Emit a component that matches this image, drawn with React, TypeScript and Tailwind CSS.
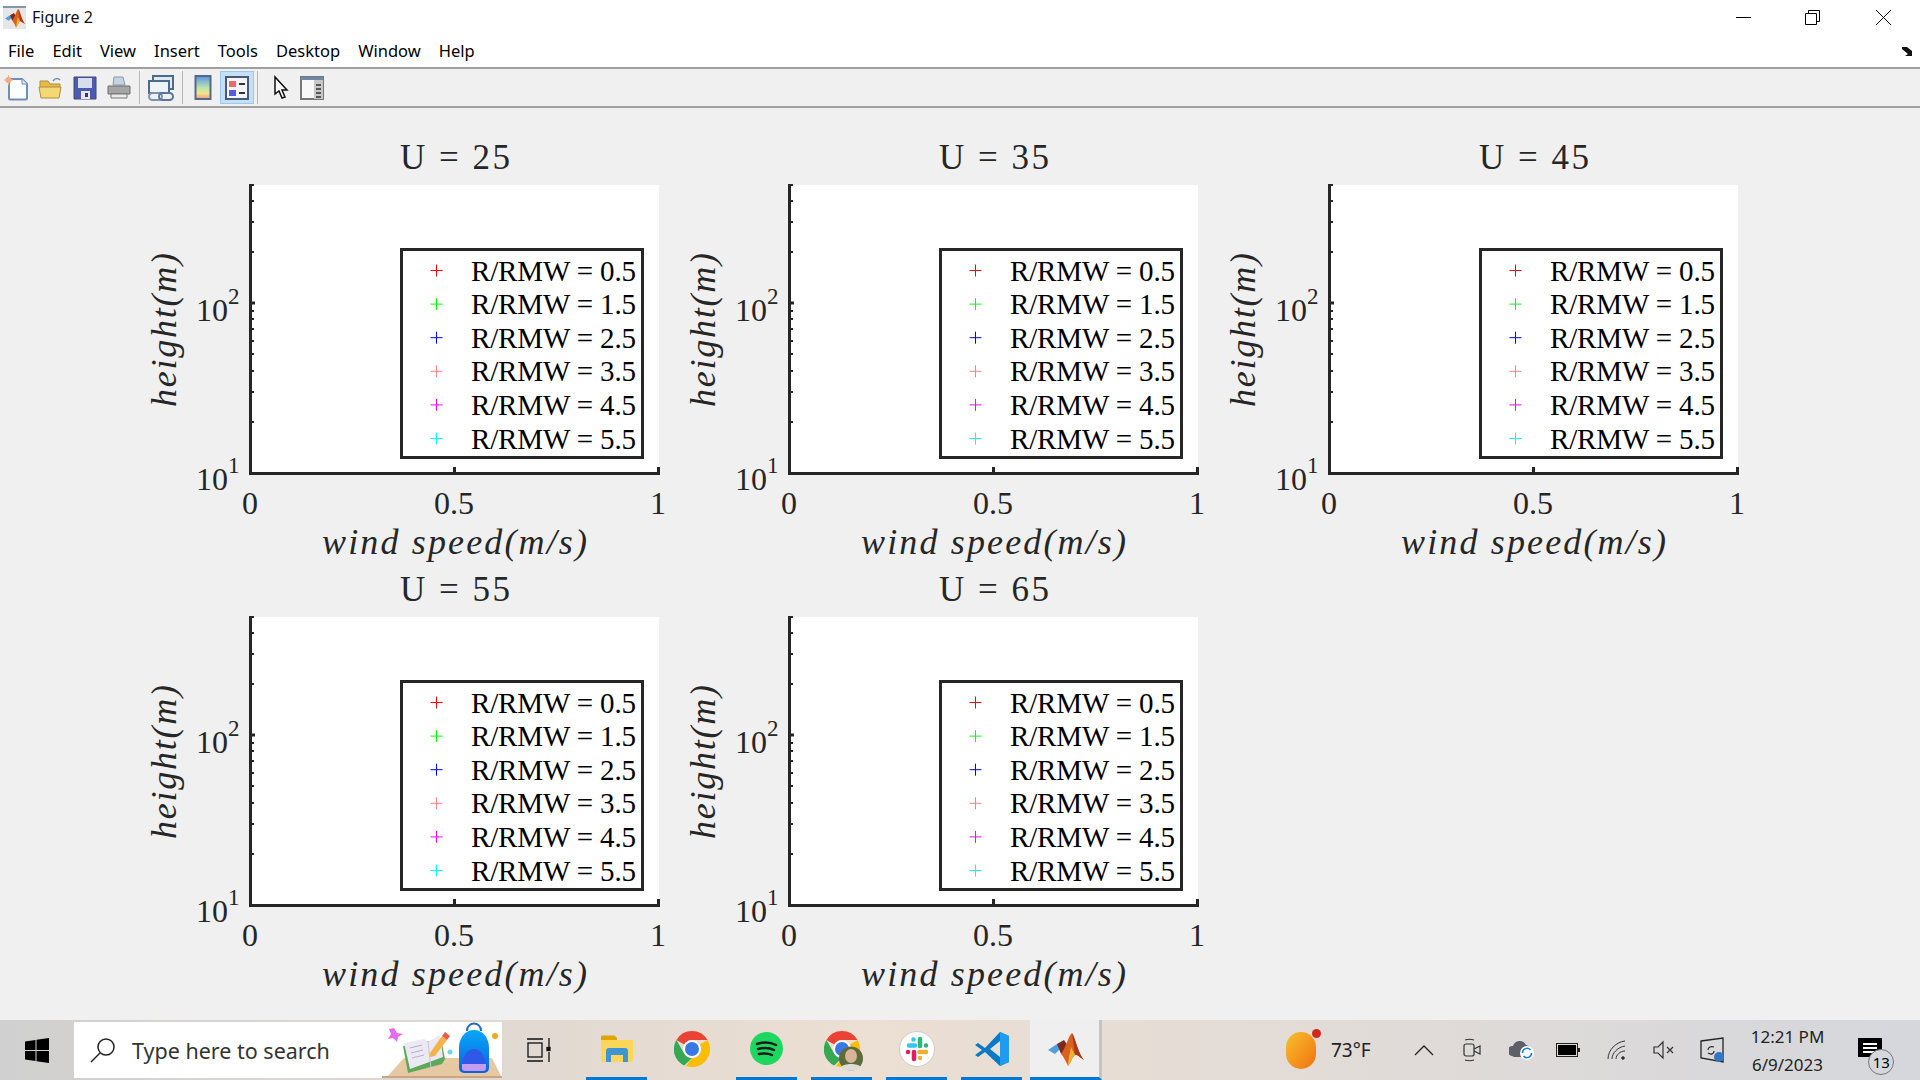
const legendItems = [
  { label: 'R/RMW = 0.5', color: '#ff0000' },
  { label: 'R/RMW = 1.5', color: '#00ff00' },
  { label: 'R/RMW = 2.5', color: '#0000ff' },
  { label: 'R/RMW = 3.5', color: '#ff8080' },
  { label: 'R/RMW = 4.5', color: '#ff00ff' },
  { label: 'R/RMW = 5.5', color: '#00ffff' },
];

// y positions of the log ticks, in chart coordinates
const minorTicks = [292, 262, 241, 224, 211, 199, 189, 181, 122, 92, 71, 55];

const Plot = ({ u }: { u: number }) => {
  return (
    <svg width="539" height="432" className="block overflow-visible font-['Liberation_Serif',serif] fill-[#262626]">
      <text x="270" y="39" textLength="110" className="text-[35px]">U = {u}</text>
      <rect x="120" y="55" width="409" height="288" fill="#ffffff" />
      <path d="M120.500 54V343.500H530" fill="none" stroke="#262626" strokeWidth="3" />
      <path d="M119 173H125M324.500 343V337M528.500 343V337" stroke="#262626" strokeWidth="3" fill="none" />
      {minorTicks.map((y) => (
        <path key={y} d={`M121 ${y}H124`} stroke="#262626" strokeWidth="2" />
      ))}
      <text x="66" y="191" className="text-[32px]">10</text>
      <text x="98" y="174" className="text-[23px]">2</text>
      <text x="66" y="360" className="text-[32px]">10</text>
      <text x="98" y="343" className="text-[23px]">1</text>
      <text x="120" y="384" textAnchor="middle" className="text-[32px]">0</text>
      <text x="324" y="384" textAnchor="middle" className="text-[32px]">0.5</text>
      <text x="528" y="384" textAnchor="middle" className="text-[32px]">1</text>
      <text x="192" y="424" textLength="265" className="text-[36px] italic">wind speed(m/s)</text>
      <text transform="translate(46 277) rotate(-90)" textLength="154" className="text-[36px] italic">height(m)</text>
      <rect x="271.500" y="119.500" width="241" height="208" fill="#ffffff" stroke="#262626" strokeWidth="3" />
      {legendItems.map((item, i) => {
        const y = 140.500 + i * 33.600;
        return (
          <g key={item.label}>
            <path d={`M306.500 ${y - 6}v12M300.500 ${y}h12`} stroke={item.color} strokeWidth="1" fill="none" />
            <text x="341" y={y + 10} textLength="165" className="text-[29px] fill-black">{item.label}</text>
          </g>
        );
      })}
    </svg>
  );
};

const NewIcon = () => (
  <svg width="26" height="26" viewBox="0 0 26 26">
    <path d="M5 4h13l5 5v14a1.500 1.500 0 0 1-1.500 1.500H6.500A1.500 1.500 0 0 1 5 23z" fill="#fbfdff" stroke="#6f8fb8" strokeWidth="2" />
    <path d="M18 4v5h5" fill="#dbe7f3" stroke="#6f8fb8" />
    <circle cx="4.500" cy="5" r="3" fill="#f5a772" />
    <path d="M4.500 0v10M0 5h9" stroke="#f0b089" />
  </svg>
);

const OpenIcon = () => (
  <svg width="26" height="26" viewBox="0 0 26 26">
    <path d="M2 6h8l2 3h10v4H2z" fill="#e9bb45" stroke="#a98d45" />
    <path d="M1 12h22l-2 11H3z" fill="#f5d874" stroke="#a98d45" />
    <path d="M15 6c2-3 5-3 7-1" fill="none" stroke="#6f8fb0" strokeWidth="1.500" />
  </svg>
);

const SaveIcon = () => (
  <svg width="26" height="26" viewBox="0 0 26 26">
    <path d="M2 2h22v22H2z" fill="#4b5bb0" stroke="#3d4a7a" />
    <rect x="6" y="3" width="14" height="10" fill="#d8dcec" />
    <rect x="9" y="16" width="9" height="8" fill="#e8e8ee" />
    <rect x="13" y="18" width="3" height="4" fill="#303a70" />
  </svg>
);

const PrintIcon = () => (
  <svg width="26" height="26" viewBox="0 0 26 26">
    <path d="M8 2h9l2 8H7z" fill="#c4d3e2" stroke="#8e9aa6" />
    <path d="M2 11h22v8H2z" fill="#a5a5a5" stroke="#6e6e6e" />
    <path d="M5 19h16v4H5z" fill="#ececec" stroke="#777" />
  </svg>
);

const LinkIcon = () => (
  <svg width="26" height="28" viewBox="0 0 26 28">
    <path d="M5 2h20v13H5z" fill="#dfe7ef" stroke="#4c6a8c" strokeWidth="2" />
    <path d="M1 7h20v12H1z" fill="#eef3f8" stroke="#4c6a8c" strokeWidth="2" />
    <rect x="1" y="19" width="13" height="7" rx="3.500" fill="none" stroke="#7c94ad" strokeWidth="2" />
    <rect x="11" y="19" width="14" height="7" rx="3.500" fill="none" stroke="#57769a" strokeWidth="2" />
  </svg>
);

const ColorbarIcon = () => (
  <svg width="18" height="26" viewBox="0 0 18 26">
    <defs>
      <linearGradient id="cbar" x1="0" y1="0" x2="0" y2="1">
        <stop offset="0" stopColor="#5b8fe8" />
        <stop offset="0.5" stopColor="#b8e4b0" />
        <stop offset="0.75" stopColor="#f2e48c" />
        <stop offset="1" stopColor="#ee9a80" />
      </linearGradient>
    </defs>
    <rect x="1.500" y="1" width="15" height="23" fill="url(#cbar)" stroke="#56688a" strokeWidth="2" />
  </svg>
);

const LegendIcon = () => (
  <svg width="24" height="24" viewBox="0 0 24 24">
    <rect x="1" y="1" width="22" height="22" fill="#f4f4f8" stroke="#46597a" strokeWidth="2" />
    <rect x="4" y="5" width="7" height="6" fill="#e86a6a" />
    <rect x="4" y="14" width="7" height="6" fill="#5a5adf" />
    <path d="M14 8h6M14 17h6" stroke="#333" strokeWidth="2" />
  </svg>
);

const PointerIcon = () => (
  <svg width="18" height="26" viewBox="0 0 18 26">
    <path d="M3 2v17l4-3 3 7 3-1-3-7h5z" fill="#f8f8f8" stroke="#111" strokeWidth="1.500" />
  </svg>
);

const PanelIcon = () => (
  <svg width="24" height="24" viewBox="0 0 24 24">
    <rect x="1" y="1" width="22" height="22" fill="#f8f8f8" stroke="#777" strokeWidth="2" />
    <rect x="1" y="1" width="22" height="3" fill="#6c8aa8" />
    <rect x="14" y="4" width="9" height="19" fill="#c8c8c8" />
    <path d="M16 9h5M16 13h5M16 17h5M16 21h5" stroke="#333" strokeWidth="1.500" />
  </svg>
);

const MatlabLogo = ({ size }: { size: number }) => (
  <svg width={size} height={size} viewBox="0 0 36 36">
    <path d="M0 19l9-6 4 4-6 6z" fill="#4f9fd8" />
    <path d="M9 13l7-4 4 6-7 8z" fill="#7a2a20" />
    <path d="M13 23c5-6 7-18 11-21 3 4 6 20 12 27-5-3-7-6-9-5-3 2-4 8-7 11-2-4-4-9-7-12z" fill="#d9601e" />
    <path d="M24 2c3 4 6 20 12 27-5-3-7-6-9-5-1-8-2-15-3-22z" fill="#a53a1c" />
    <path d="M20 35c3-3 4-9 7-11l-4-8c-1 5-3 14-3 19z" fill="#f2b035" />
  </svg>
);

const ChromeIcon = () => (
  <svg width="36" height="38" viewBox="0 0 36 36">
    <path d="M2.400 9A18 18 0 0 1 33.600 9H18a9 9 0 0 0-7.800 4.500z" fill="#ea4335" />
    <path d="M2.400 9l7.800 13.500A9 9 0 0 0 18 27l-7.800 7.600A18 18 0 0 1 2.400 9z" fill="#34a853" />
    <path d="M33.600 9A18 18 0 0 1 12 35l6-8a9 9 0 0 0 7.800-13.500L25.800 13.500z" fill="#fbbc04" />
    <circle cx="18" cy="18" r="9" fill="#ffffff" />
    <circle cx="18" cy="18" r="7" fill="#3b78e7" />
  </svg>
);

const barItems = [
  { key: 'explorer', active: true },
  { key: 'chrome', active: false },
  { key: 'spotify', active: true },
  { key: 'chrome2', active: true },
  { key: 'slack', active: true },
  { key: 'code', active: true },
];

const BarIcon = ({ name }: { name: string }) => {
  if (name === 'explorer') {
    return (
      <svg width="32" height="27" viewBox="0 0 32 27">
        <path d="M0 2a1.500 1.500 0 0 1 1.500-1.500h12L16 3v4H0z" fill="#e0a600" />
        <path d="M0 5h32v20a2 2 0 0 1-2 2H2a2 2 0 0 1-2-2z" fill="#fcd658" />
        <path d="M5 27V16a3 3 0 0 1 3-3h16a3 3 0 0 1 3 3v11h-5v-7H10v7z" fill="#3d95d4" />
      </svg>
    );
  }
  if (name === 'chrome') return <ChromeIcon />;
  if (name === 'spotify') {
    return (
      <svg width="33" height="33" viewBox="0 0 33 33">
        <circle cx="16.500" cy="16.500" r="16.500" fill="#1ed760" />
        <path d="M7 12c6-2 13-2 19 1M8 17c6-1.500 12-1 16 1M9 22c5-1 9-1 13 1" fill="none" stroke="#1a1a1a" strokeWidth="2.500" strokeLinecap="round" />
      </svg>
    );
  }
  if (name === 'chrome2') {
    return (
      <div className="relative w-[36px] h-[38px]">
        <ChromeIcon />
        <svg width="24" height="25" viewBox="0 0 24 25" className="absolute left-[15px] top-[16px]">
          <circle cx="12" cy="12.500" r="12" fill="#5d6a3c" />
          <ellipse cx="12" cy="10" rx="6" ry="7" fill="#d6b596" />
          <path d="M2 21c3-4 17-4 20 0-4 5-16 5-20 0z" fill="#dcdcd8" />
        </svg>
      </div>
    );
  }
  if (name === 'slack') {
    return (
      <svg width="36" height="36" viewBox="0 0 36 36">
        <circle cx="18" cy="18" r="17.500" fill="#ffffff" stroke="#cfc9c4" />
        <g strokeWidth="4.500" strokeLinecap="round" fill="none">
          <path d="M10 14.500h6M14.500 8.500v.1" stroke="#36c5f0" />
          <path d="M21 8v7M27 14.500v.1" stroke="#2eb67d" />
          <path d="M20.500 21h6.500M21 27v.1" stroke="#ecb22e" />
          <path d="M15 21v7M9 21v.1" stroke="#e01e5a" />
        </g>
      </svg>
    );
  }
  return (
    <svg width="36" height="36" viewBox="0 0 36 36">
      <path d="M26 1l9 4v26l-9 4-15-14-7 5-3-2 7-5-7-5 3-2 7 5z" fill="#0a7ac4" />
      <path d="M26 1l9 4v26l-9 4z" fill="#1f9cf0" />
      <path d="M26 10v16l-10-8z" fill="#e8dfd8" />
    </svg>
  );
};

const WindowsLogo = () => (
  <svg width="24" height="25" viewBox="0 0 24 25" fill="#000000">
    <path d="M0 3.500l10.500-1.500v10H0zM11.500 1.800L24 0v12H11.500zM0 13h10.500v10L0 21.500zM11.500 13H24v12l-12.500-1.800z" />
  </svg>
);

const Highlight = () => (
  <svg width="120" height="58" viewBox="0 0 120 58" className="absolute right-0 bottom-0">
    <defs>
      <linearGradient id="pack" x1="0" y1="0" x2="0" y2="1">
        <stop offset="0" stopColor="#08a8f8" />
        <stop offset="1" stopColor="#0a62e0" />
      </linearGradient>
    </defs>
    <path d="M4 58l18-20h88l10 20z" fill="#e6c8a2" />
    <path d="M0 56h120v2H0z" fill="#c9a681" />
    <path d="M12 8l3 5 6 1-5 3-1 5-4-4-5 1 3-5-2-5z" fill="#e56cf0" />
    <path d="M21 26l5 27 34-9 3-5-4-20z" fill="#5ca95a" />
    <path d="M22 23l20-4 4 3 12-7 3 22-33 12z" fill="#ece8f4" />
    <path d="M46 22l3 26" stroke="#c8c2dc" strokeWidth="1" />
    <path d="M28 28l12-3M29 33l12-3M30 38l12-3" stroke="#b5b3c2" strokeWidth="1" />
    <path d="M48 33l12-17 5 4-12 16-5 1z" fill="#f4b24a" />
    <path d="M60 16l3-4 5 4-3 4z" fill="#ec5a4a" />
    <circle cx="68" cy="32" r="2.500" fill="#6fd6e6" />
    <circle cx="113" cy="16" r="3" fill="#f2a81d" />
    <path d="M85 11c0-10 14-10 14 0" fill="none" stroke="#1a6fc4" strokeWidth="2" />
    <path d="M77 28c0-10 6-18 15-18s15 8 15 18v20a5 5 0 0 1-5 5H82a5 5 0 0 1-5-5z" fill="url(#pack)" />
    <path d="M80 47c0-10 5-18 12-18s12 8 12 18v2H80z" fill="#2f58e8" />
    <path d="M80 44h24v4a3 3 0 0 1-3 3H83a3 3 0 0 1-3-3z" fill="#c79cf0" />
  </svg>
);

const TrayIcons = () => (
  <div className="flex items-center">
    <svg width="20" height="12" viewBox="0 0 20 12" className="ml-[43px]">
      <path d="M1 11l9-9 9 9" fill="none" stroke="#222" strokeWidth="1.300" />
    </svg>
    <svg width="18" height="24" viewBox="0 0 18 24" className="ml-[29px]" fill="none" stroke="#333" strokeWidth="1.200">
      <rect x="1" y="6" width="10" height="12" rx="2" />
      <path d="M11 11l6-3v8l-6-3M2 2c3-1 6-1 9 0M2 22c3 1 6 1 9 0" />
    </svg>
    <svg width="26" height="24" viewBox="0 0 26 24" className="ml-[28px]">
      <path d="M3 18a5 5 0 0 1 1-10 7 7 0 0 1 13-1 5 5 0 0 1 4 7l-4 5H5z" fill="#5c6068" />
      <circle cx="18" cy="15" r="7" fill="#ffffff" />
      <path d="M13.500 15a4.500 4.500 0 0 1 8-3M22.500 15a4.500 4.500 0 0 1-8 3" fill="none" stroke="#1b7fd6" strokeWidth="1.500" />
    </svg>
    <svg width="24" height="14" viewBox="0 0 24 14" className="ml-[21px]">
      <rect x="0.500" y="0.500" width="21" height="13" fill="none" stroke="#222" />
      <rect x="2" y="2" width="18" height="10" fill="#000000" />
      <rect x="22" y="5" width="2" height="4" fill="#222" />
    </svg>
    <svg width="20" height="20" viewBox="0 0 20 20" className="ml-[27px]" fill="none" stroke="#333" strokeWidth="1">
      <path d="M1 19C1 10 9 2 18 1M5 19c0-6 6-12 13-13M9 19c0-4 4-8 9-8" />
      <circle cx="16" cy="18" r="1.300" fill="#333" />
    </svg>
    <svg width="22" height="20" viewBox="0 0 22 20" className="ml-[26px]" fill="none" stroke="#333" strokeWidth="1.200">
      <path d="M1 7v6h4l5 5V2L5 7zM14 7l6 6M20 7l-6 6" />
    </svg>
    <svg width="24" height="26" viewBox="0 0 24 26" className="ml-[25px]">
      <path d="M1 4l22-3v24L1 21z" fill="none" stroke="#222" strokeWidth="1.300" />
      <path d="M8 13c0-3 3-4 6-3M14 14c0 3-3 4-6 2" fill="none" stroke="#222" strokeWidth="1.200" />
      <circle cx="19" cy="20" r="5" fill="#2f78c4" />
    </svg>
  </div>
);

const App = () => {
  return (
    <div className="relative flex flex-col w-[1920px] h-[1080px] overflow-hidden bg-[#f0f0f0] font-['Noto_Sans',sans-serif]">
      <div className="flex items-center h-[34px] bg-white text-[#111] text-[16px]">
        <div className="ml-[3px] w-[23px] h-[23px] bg-[#e6e6e6] border-t-2 border-[#7f98b2] flex items-center justify-center">
          <MatlabLogo size={20} />
        </div>
        <span className="ml-[6px]">Figure 2</span>
        <div className="ml-auto flex items-center h-full">
          <div className="w-[15px] h-px bg-black mr-[54px]" />
          <svg width="15" height="15" viewBox="0 0 15 15" className="mr-[56px]" fill="none" stroke="#000">
            <path d="M3.500 3V.5h11v11H12M.5 3.500h11v11H.5z" />
          </svg>
          <svg width="15" height="15" viewBox="0 0 15 15" className="mr-[29px]" stroke="#000">
            <path d="M0 0l15 15M15 0L0 15" />
          </svg>
        </div>
      </div>
      <div className="flex items-center justify-between h-[35px] bg-white border-b-2 border-[#a0a0a0] pl-[8px] pr-[7px] text-[16.500px] text-black">
        <div className="flex gap-[18px] pt-[2px]">
          <span>File</span>
          <span>Edit</span>
          <span>View</span>
          <span>Insert</span>
          <span>Tools</span>
          <span>Desktop</span>
          <span>Window</span>
          <span>Help</span>
        </div>
        <svg width="12" height="10" viewBox="0 0 12 10" fill="#111">
          <path d="M1 1h5l5 4V1v9H4l3-2-6-5z" />
        </svg>
      </div>
      <div className="flex items-center h-[39px] border-b-2 border-[#a0a0a0]">
        <div className="flex items-center justify-center w-[34px] h-[36px]"><NewIcon /></div>
        <div className="flex items-center justify-center w-[34px] h-[36px]"><OpenIcon /></div>
        <div className="flex items-center justify-center w-[34px] h-[36px]"><SaveIcon /></div>
        <div className="flex items-center justify-center w-[34px] h-[36px]"><PrintIcon /></div>
        <div className="ml-[3px] mr-[3px] w-px h-[33px] bg-[#b8b8b8]" />
        <div className="flex items-center justify-center w-[36px] h-[36px]"><LinkIcon /></div>
        <div className="ml-[3px] mr-[3px] w-px h-[33px] bg-[#b8b8b8]" />
        <div className="flex items-center justify-center w-[34px] h-[36px]"><ColorbarIcon /></div>
        <div className="flex items-center justify-center w-[34px] h-[33px] bg-[#c5e0f5] border border-[#99c9ee]"><LegendIcon /></div>
        <div className="ml-[3px] mr-[7px] w-px h-[33px] bg-[#b8b8b8]" />
        <div className="flex items-center justify-center w-[31px] h-[36px]"><PointerIcon /></div>
        <div className="flex items-center justify-center w-[31px] h-[36px]"><PanelIcon /></div>
      </div>
      <div className="flex-1 pl-[130px] pt-[22px]">
        <div className="grid grid-cols-[539px_540px_540px] auto-rows-[432px]">
          <Plot u={25} />
          <Plot u={35} />
          <Plot u={45} />
          <Plot u={55} />
          <Plot u={65} />
        </div>
      </div>
      <div className="flex items-center h-[60px] bg-gradient-to-r from-[#d0d0d0] via-[#ecdfd3] to-[#d5d7dc] via-45% text-[#222]">
        <div className="flex items-center justify-center w-[74px]"><WindowsLogo /></div>
        <div className="relative flex items-center w-[428px] h-[56px] bg-white pl-[16px] text-[#333] text-[21.500px]">
          <svg width="26" height="26" viewBox="0 0 26 26" fill="none" stroke="#222" strokeWidth="1.500">
            <circle cx="16" cy="10" r="8" />
            <path d="M10 16L1 25" />
          </svg>
          <span className="ml-[16px] pt-[3px]">Type here to search</span>
          <Highlight />
        </div>
        <svg width="24" height="26" viewBox="0 0 24 26" className="ml-[25px]" fill="none" stroke="#111" strokeWidth="1.300">
          <rect x="1" y="6" width="14" height="14" />
          <path d="M0 2h16M0 24h16M22 1v9M22 15v10" />
          <rect x="20" y="10.500" width="3" height="3" fill="#111" />
        </svg>
        <div className="ml-[35px] flex">
          {barItems.map((item) => (
            <div
              key={item.key}
              className={item.active ? 'flex items-center justify-center w-[61px] h-[60px] mr-[14px] border-b-[3px] border-[#0078d4]' : 'flex items-center justify-center w-[61px] h-[60px] mr-[14px] border-b-[3px] border-transparent'}
            >
              <BarIcon name={item.key} />
            </div>
          ))}
        </div>
        <div className="-ml-[6px] flex items-center justify-center w-[72px] h-[60px] pl-[3px] bg-[#efefef] border-b-[3px] border-[#0078d4] border-r-[3px] border-r-[#c4c4c4]">
          <MatlabLogo size={36} />
        </div>
        <div className="ml-[184px] w-[36px] h-[38px] relative flex items-center">
          <div className="w-[30px] h-[37px] rounded-full bg-gradient-to-br from-[#f5c02c] to-[#f0700f]" />
          <div className="absolute right-[1px] top-[-2px] w-[9px] h-[9px] rounded-full bg-[#cf2a20]" />
        </div>
        <span className="ml-[9px] text-[19px]">73°F</span>
        <TrayIcons />
        <div className="ml-[27px] flex flex-col items-center gap-[7px] text-[17px] leading-[21px]">
          <span>12:21 PM</span>
          <span>6/9/2023</span>
        </div>
        <div className="relative ml-[34px] -mt-[5px] w-[24px] h-[19px] bg-black flex flex-col justify-center gap-[2px] px-[5px]">
          <div className="h-[2px] bg-white" />
          <div className="h-[2px] bg-white" />
          <div className="h-[2px] bg-white" />
          <div className="absolute left-[10px] top-[11px] w-[26px] h-[26px] rounded-full border border-[#777] bg-[#d5d7dc] flex items-center justify-center text-black text-[15px]">13</div>
        </div>
      </div>
    </div>
  );
};

export default App;
